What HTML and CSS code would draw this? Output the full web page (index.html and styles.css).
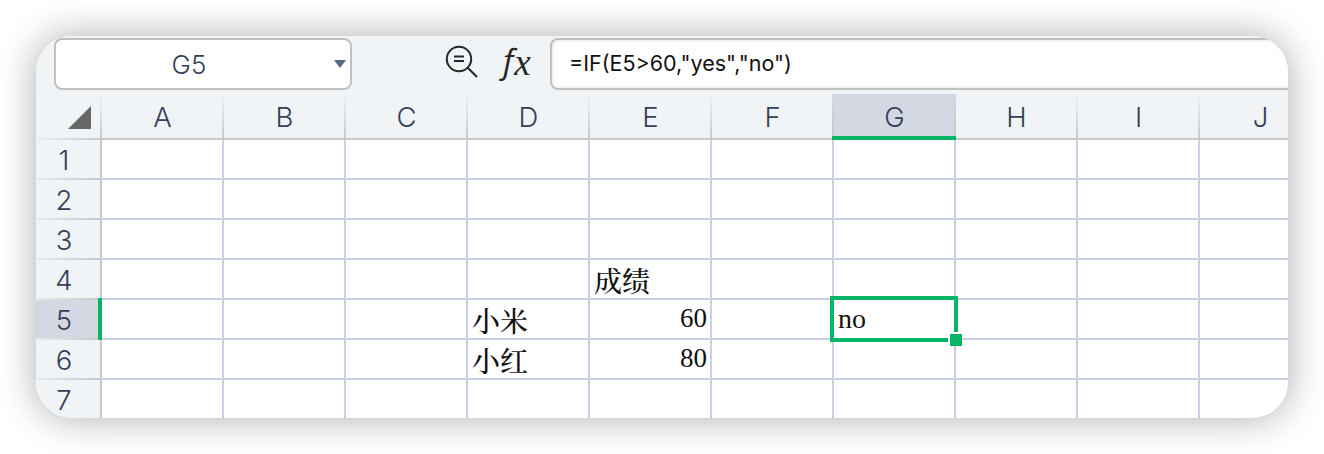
FILE: index.html
```html
<!DOCTYPE html>
<html lang="zh-CN">
<head>
<meta charset="utf-8">
<title>Spreadsheet</title>
<link rel="stylesheet" href="styles.css">
</head>
<body>
<main class="window">
  <div class="toolbar">
    <div class="name-box"><span class="name-text">G5</span><span class="caret"></span></div>
    <div class="tools">
      <svg class="search" width="34" height="34" viewBox="0 0 34 34" fill="none" stroke="#262626" stroke-width="2">
        <circle cx="14" cy="14" r="12.2"/>
        <path d="M9 11.5h10M9 16h10M22.7 22.7L32 32"/>
      </svg>
      <span class="fx"><span class="fx-f">f</span><span class="fx-x">x</span></span>
    </div>
    <div class="formula">=IF(E5&gt;60,"yes","no")</div>
  </div>
  <div class="sheet" id="sheet"></div>
</main>
<script src="sheet.js"></script>
</body>
</html>
```
FILE: styles.css
```css
* { box-sizing: border-box; }
body { margin: 0; padding: 36px; height: 454px; background: #fff; overflow: hidden; font-family: Inter, "Liberation Sans", sans-serif; }
.window { width: 1252px; height: 382px; border-radius: 36px; overflow: hidden; background: #fff; box-shadow: 0 0 38px rgba(0, 0, 0, .33); }
.toolbar { display: flex; height: 58px; padding: 2px 0 4px 18px; background: #f0f4f7; }
.name-box { display: flex; align-items: center; width: 298px; height: 52px; padding: 0 4px 0 0; border: 2px solid #c0c0c0; border-radius: 8px; background: #fff; color: #353e58; }
.name-text { flex: 1; padding: 0 12px 0 0; text-align: center; font-size: 26px; font-weight: 300; }
.caret { border: 6px solid transparent; border-top: 8px solid #5b6987; border-bottom: 0; }
.tools { display: flex; width: 198px; padding: 7px 0 0 93px; }
.search { flex: none; }
.fx { display: flex; padding-left: 24px; color: #262626; line-height: 34px; }
.fx-f { font: italic 400 33px/32px "Open Sans", sans-serif; }
.fx-x { margin-left: 1px; font: italic 37px/36px "Liberation Serif", serif; }
.formula { flex: 1; height: 52px; padding-left: 17px; border: 2px solid #c0c0c0; border-right: 0; border-radius: 8px 0 0 8px; background: #fff; box-shadow: inset 2px 2px #f0f4f7, inset 0 -2px #f0f4f7; color: #111; font-size: 21.5px; line-height: 47px; white-space: pre; }
.sheet { display: grid; grid-template-columns: 66px repeat(10, 122px); grid-template-rows: 46px repeat(7, 40px); }
.col-head, .row-head, .corner { display: flex; align-items: center; justify-content: center; background: #f0f4f7; color: #353e58; font-size: 27.5px; font-weight: 350; }
.col-head { padding: 1px 1px 0 0; border-bottom: 2px solid #c8c8c8; background: linear-gradient(#f0f4f7, #c8c8c8) right / 2px 100% no-repeat #f0f4f7; }
.corner { justify-content: flex-end; padding: 0 11px 0 0; border-bottom: 2px solid; border-image: linear-gradient(90deg, #edf0f3, #c8c8c8) 1; background: linear-gradient(#f0f4f7, #c8c8c8) right / 2px 100% no-repeat #f0f4f7; }
.corner-mark { width: 23px; height: 23px; margin-top: 3px; background: #666; clip-path: polygon(100% 0, 100% 100%, 0 100%); }
.row-head { padding: 0 8px 1px 0; border-right: 2px solid #c8c8c8; background: linear-gradient(90deg, #e8ebee, #c8c8c8) bottom / 100% 2px no-repeat #f0f4f7; }
.col-head.active { position: relative; padding-top: 3px; border-bottom: 4px solid #06b566; background: linear-gradient(#d4d8e3, #c8c8c8) right / 2px 100% no-repeat #d4d8e3; }
.col-head.active::before { content: ""; position: absolute; left: -2px; top: 0; width: 2px; height: 46px; background: linear-gradient(#d4d8e3, #c8c8c8 42px, #06b566 42px); }
.row-head.active { position: relative; padding-right: 6px; border-right: 4px solid #06b566; background-color: #d4d8e3; }
.row-head.active::before { content: ""; position: absolute; right: -4px; top: -2px; width: 4px; height: 2px; background: #06b566; }
.cell { height: 40px; border-right: 2px solid #c8d0e5; border-bottom: 2px solid #c8d0e5; padding: 0 3px 0 4px; font: 28px/38px "Liberation Serif", "Noto Serif CJK SC", "Noto Sans CJK SC", serif; color: #111; white-space: nowrap; }
.cell.number { text-align: right; font-size: 27px; line-height: 36px; }
.cell.cjk { line-height: 40px; font-weight: 500; font-family: "Noto Serif CJK SC", "Noto Sans CJK SC", serif; }
.cell.selected { position: relative; }
.selection { position: absolute; left: -4px; top: -4px; width: 128px; height: 46px; border: 4px solid #06b566; }
.handle { position: absolute; right: -8px; bottom: -8px; width: 14px; height: 14px; border: 2px solid #fff; border-right: 0; border-bottom: 0; background: #06b566; background-clip: padding-box; }
```
FILE: sheet.js
```js
const sheet = document.getElementById('sheet');
const values = { E4: '成绩', D5: '小米', E5: '60', G5: 'no', D6: '小红', E6: '80' };
const columns = 'ABCDEFGHIJ'.split('');
function add(className, text) {
  const el = document.createElement('div');
  el.className = className;
  el.textContent = text || '';
  sheet.appendChild(el);
  return el;
}
add('corner').innerHTML = '<span class="corner-mark"></span>';
columns.forEach(c => add('col-head' + (c === 'G' ? ' active' : ''), c));
for (let row = 1; row <= 7; row++) {
  add('row-head' + (row === 5 ? ' active' : ''), String(row));
  columns.forEach(c => {
    const value = values[c + row] || '';
    let name = 'cell';
    if (/^\d+$/.test(value)) name += ' number';
    if (/[\u4e00-\u9fff]/.test(value)) name += ' cjk';
    const cell = add(name, value);
    if (c + row === 'G5') {
      cell.classList.add('selected');
      cell.insertAdjacentHTML('beforeend', '<span class="selection"><span class="handle"></span></span>');
    }
  });
}
```
